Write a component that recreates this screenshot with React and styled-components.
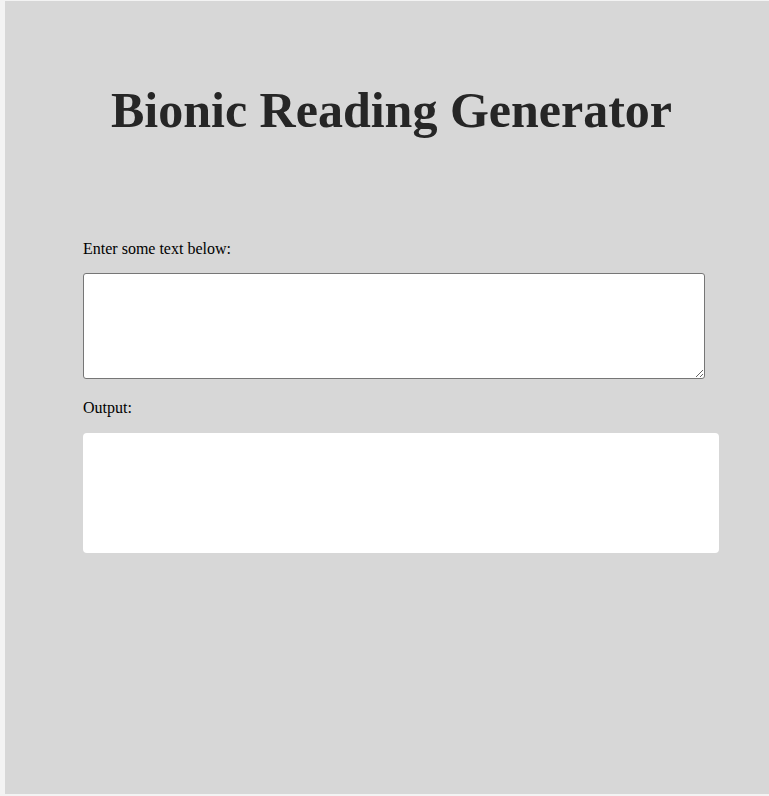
import styled, { createGlobalStyle } from "styled-components";

const GlobalStyle = createGlobalStyle`
  html, body {
    margin: 0;
    background: #f3f3f3;
  }
  body {
    font-family: "Liberation Serif", "Times New Roman", serif;
  }
`;

const Page = styled.div`
  padding: 1px 0 2px 5px;
`;

const Panel = styled.main`
  background-color: #d7d7d7;
  height: 793px;
  width: 771px;
  box-sizing: border-box;
  padding: 79px 0 0 78px;
`;

const Title = styled.h1`
  margin: 0 0 100px -76px;
  font-size: 50px;
  line-height: 60px;
  font-weight: bold;
  color: #262626;
  text-align: center;
`;

const Label = styled.label`
  display: block;
  font-size: 16px;
  line-height: 18px;
  color: #000;
  margin-bottom: ${(p) => p.$gap || 17}px;
`;

const Input = styled.textarea`
  display: block;
  width: 622px;
  height: 106px;
  box-sizing: border-box;
  border: 1px solid #767676;
  border-radius: 3px;
  background: #fff;
  margin: 0 0 20px;
  padding: 2px;
  font-family: inherit;
`;

const Output = styled.div`
  width: 636px;
  height: 120px;
  background: #fff;
  border-radius: 4px;
`;

export default function App() {
  return (
    <Page>
      <GlobalStyle />
      <Panel>
        <Title>Bionic Reading Generator</Title>
        <Label htmlFor="source" $gap={15}>Enter some text below:</Label>
        <Input id="source" />
        <Label $gap={16}>Output:</Label>
        <Output />
      </Panel>
    </Page>
  );
}
